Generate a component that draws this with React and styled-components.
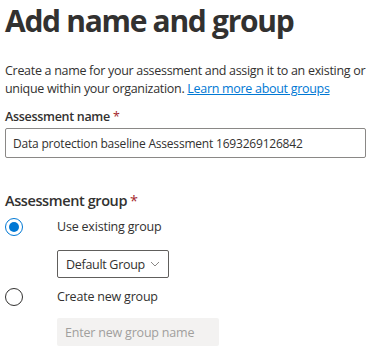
import React from "react";
import styled, { createGlobalStyle } from "styled-components";

const GlobalStyle = createGlobalStyle`
  html, body {
    margin: 0;
    padding: 0;
    background: #ffffff;
    overflow: hidden;
  }
  body {
    font-family: "Open Sans", "Noto Sans", sans-serif;
    color: #323130;
  }
`;

const StylePanel = styled.div`
  width: 640px;
  padding: 0 0 0 5px;

  .panel {
    &-title {
      margin: 0;
      padding-top: 1px;
      font-size: 30px;
      line-height: 40px;
      font-weight: 700;
      letter-spacing: -1.3px;
      color: #323130;
    }
    &-desc {
      margin: 21px 0 0;
      font-size: 12.5px;
      line-height: 18px;
      white-space: nowrap;
      letter-spacing: -0.3px;
    }
  }
`;

const Link = styled.a`
  color: #0078d4;
  text-decoration: underline;
  cursor: pointer;
`;

const Label = styled.label`
  display: block;
  font-size: 12.5px;
  line-height: 18px;
  font-weight: 600;
  letter-spacing: -0.3px;
  margin: ${(props) => props.$top || 0}px 0 0;

  span {
    color: #a4262c;
    margin-left: 3px;
    font-weight: 400;
  }
`;

const SectionLabel = styled(Label)`
  font-size: 14.5px;
  line-height: 22px;
  letter-spacing: -0.4px;
`;

const TextField = styled.div`
  box-sizing: border-box;
  margin-top: 2px;
  width: 361px;
  height: 30px;
  border: 1px solid #8a8886;
  border-radius: 2px;
  padding: 0 7px;
  display: flex;
  align-items: center;
  font-size: 12px;
  color: #323130;
  letter-spacing: -0.2px;
  white-space: nowrap;
`;

const RadioRow = styled.div`
  display: flex;
  align-items: center;
  margin-top: ${(props) => props.$top || 0}px;
`;

const RadioCircle = styled.span`
  box-sizing: border-box;
  width: 18px;
  height: 18px;
  border-radius: 50%;
  border: 1px solid ${(props) => (props.$checked ? "#0078d4" : "#323130")};
  display: flex;
  align-items: center;
  justify-content: center;
  flex-shrink: 0;

  &::after {
    content: "";
    width: 10px;
    height: 10px;
    border-radius: 50%;
    background: ${(props) => (props.$checked ? "#0078d4" : "transparent")};
  }
`;

const RadioText = styled.span`
  margin-left: 34px;
  font-size: 12.5px;
  letter-spacing: -0.2px;
  line-height: 18px;
`;

const Indent = styled.div`
  padding-left: 52px;
  margin-top: ${(props) => props.$top || 0}px;
`;

const Dropdown = styled.div`
  box-sizing: border-box;
  width: 112px;
  height: 28px;
  border: 1px solid #605e5c;
  border-radius: 2px;
  display: flex;
  align-items: center;
  justify-content: space-between;
  padding: 0 8px 0 8px;
  font-size: 12.5px;
  letter-spacing: -0.3px;

  svg {
    width: 10px;
    height: 10px;
  }
`;

const DisabledInput = styled.div`
  box-sizing: border-box;
  width: 162px;
  height: 28px;
  background: #f3f2f1;
  border-radius: 2px;
  display: flex;
  align-items: center;
  padding: 0 8px;
  font-size: 12.5px;
  letter-spacing: -0.2px;
  color: #a19f9d;
`;

const Chevron = () => (
  <svg viewBox="0 0 10 10" fill="none">
    <path d="M1 3 L5 7 L9 3" stroke="#8a8886" strokeWidth="1" />
  </svg>
);

const App = () => {
  return (
    <StylePanel>
      <GlobalStyle />
      <h1 className="panel-title">Add name and group</h1>
      <p className="panel-desc">
        Create a name for your assessment and assign it to an existing or new
        group. Assessment names must be
        <br />
        unique within your organization.{" "}
        <Link>Learn more about groups</Link>
      </p>

      <Label $top={10}>
        Assessment name<span>*</span>
      </Label>
      <TextField>Data protection baseline Assessment 1693269126842</TextField>

      <SectionLabel $top={32}>
        Assessment group<span>*</span>
      </SectionLabel>

      <RadioRow $top={6}>
        <RadioCircle $checked />
        <RadioText>Use existing group</RadioText>
      </RadioRow>
      <Indent $top={14}>
        <Dropdown>
          Default Group
          <Chevron />
        </Dropdown>
      </Indent>

      <RadioRow $top={10}>
        <RadioCircle />
        <RadioText>Create new group</RadioText>
      </RadioRow>
      <Indent $top={12}>
        <DisabledInput>Enter new group name</DisabledInput>
      </Indent>
    </StylePanel>
  );
};

export default App;
